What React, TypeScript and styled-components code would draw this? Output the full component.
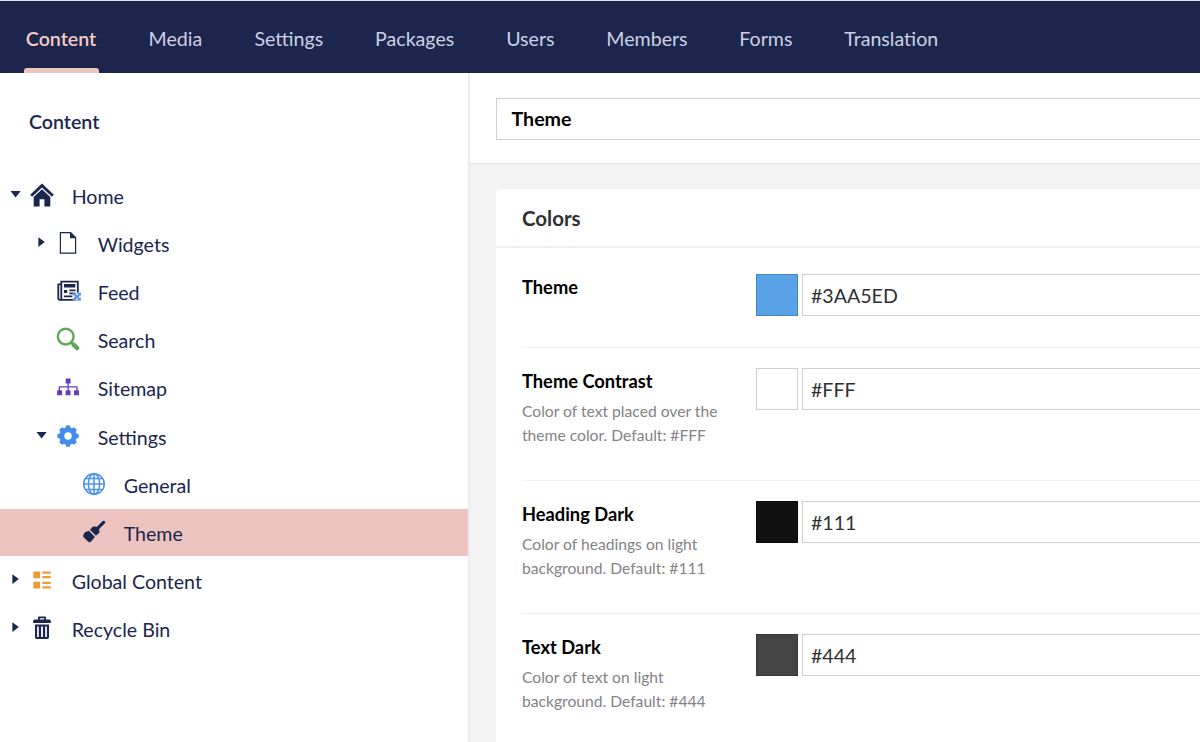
import React from 'react';
import styled, { createGlobalStyle } from 'styled-components';

const navy = '#1b264f';
const pink = '#edc5c0';

const GlobalStyle = createGlobalStyle`
  *, *::before, *::after { box-sizing: border-box; }
  body { margin: 0; background: #fff; overflow: hidden; }
`;

const Page = styled.div`
  display: flex;
  flex-direction: column;
  width: 100vw;
  height: 100vh;
  overflow: hidden;
  font-family: Lato, 'Liberation Sans', sans-serif;
  font-size: 19.6px;
  color: ${navy};
`;

const TopBar = styled.nav`
  display: flex;
  flex: none;
  gap: 47.9px;
  height: 73px;
  padding-left: 23.5px;
  background: #1c264d;
  border-top: 1px solid #dde3ee;
`;

const NavItem = styled.a<{ $active?: boolean; $width: number }>`
  display: flex;
  flex-direction: column;
  justify-content: space-between;
  align-items: center;
  flex: none;
  width: ${(p) => p.$width}px;
  line-height: 24px;
  padding-top: 26px;
  white-space: nowrap;
  color: ${(p) => (p.$active ? '#f5c9c4' : '#ccd0e4')};
  font-weight: ${(p) => (p.$active ? 600 : 400)};
  &::after {
    content: '';
    width: 100%;
    height: 5px;
    border-radius: 3px 3px 0 0;
    background: ${(p) => (p.$active ? pink : 'transparent')};
  }
`;

const Body = styled.div`
  display: flex;
  flex: 1;
  min-height: 0;
`;

const Sidebar = styled.aside`
  flex: none;
  width: 470px;
  border-right: 2px solid #edecee;
`;

const SidebarTitle = styled.h2`
  margin: 0;
  height: 98px;
  padding: 37px 0 0 29px;
  font-size: 19.6px;
  line-height: 24px;
  font-weight: 600;
`;

const TreeRow = styled.div<{ $depth: number; $selected?: boolean }>`
  display: flex;
  align-items: center;
  height: 47px;
  margin-bottom: 1.22px;
  padding-left: ${(p) => 8 + p.$depth * 26}px;
  background: ${(p) => (p.$selected ? '#ecc3be' : 'transparent')};
`;

const Caret = styled.svg`
  flex: none;
  width: 14px;
  height: 14px;
  margin: 0 7.5px 2px 0;
  fill: ${navy};
`;

const Icon = styled.svg`
  flex: none;
  width: 24px;
  height: 24px;
  overflow: visible;
`;

const TreeLabel = styled.span`
  margin-left: 18.2px;
  padding-top: 4px;
  line-height: 24px;
  white-space: nowrap;
`;

const Editor = styled.main`
  display: flex;
  flex-direction: column;
  flex: 1;
  min-width: 0;
  background: #f4f3f4;
`;

const EditorHeader = styled.header`
  flex: none;
  height: 91px;
  padding: 25px 0 0 26px;
  background: #fff;
  border-bottom: 1px solid #e6e4e6;
`;

const Field = styled.div<{ $name?: boolean }>`
  display: flex;
  align-items: center;
  flex: 1;
  height: ${(p) => (p.$name ? 41.5 : 42)}px;
  padding-left: ${(p) => (p.$name ? 14.5 : 8)}px;
  border: 1px solid #cfcdd0;
  border-right: 0;
  background: #fff;
  color: ${(p) => (p.$name ? '#000' : '#303033')};
  font-weight: ${(p) => (p.$name ? 700 : 400)};
`;

const Card = styled.section`
  flex: 1;
  margin: 25px 0 0 26px;
  background: #fff;
  border-radius: 4px 0 0 0;
`;

const CardTitle = styled.h3`
  display: flex;
  align-items: center;
  margin: 0;
  height: 59px;
  padding-left: 26px;
  border-bottom: 2px solid #efeeef;
  font-size: 20.5px;
  font-weight: 700;
  color: #303033;
`;

const Property = styled.div<{ $height: number }>`
  display: grid;
  grid-template-columns: 234px 1fr;
  height: ${(p) => p.$height}px;
  margin-left: 26px;
  padding-top: ${(p) => (p.$height === 100 ? 26 : 20)}px;
  border-bottom: 1px solid #f3f2f3;
`;

const Label = styled.div`
  padding-top: 1px;
  font-size: 18.3px;
  line-height: 24px;
  font-weight: 700;
  color: #000;
`;

const Description = styled.div`
  margin-top: 7px;
  font-size: 15.65px;
  line-height: 23.5px;
  white-space: pre-line;
  color: #838286;
`;

const ColorInput = styled.div`
  display: flex;
  gap: 4px;
`;

const Swatch = styled.span<{ $color: string; $edge: string }>`
  flex: none;
  width: 42px;
  height: 42px;
  background: ${(p) => p.$color};
  border: 1px solid ${(p) => p.$edge};
`;

const icons: Record<string, React.ReactNode> = {
  home: (
    <g fill={navy}>
      <path d="M12 .5 23.8 11.8 21.9 13.8 12 4.4 2.1 13.8.2 11.8Z" />
      <path d="M12 6.2 20.3 14V23.4H14.4V16.2H9.6V23.4H3.7V14Z" />
    </g>
  ),
  file: (
    <g>
      <path d="M4.400 1.600h10.200l5 5v15.600H4.400Z" fill="none" stroke={navy} strokeWidth="1.2" />
      <path d="M14 1.200v6h6Z" fill={navy} />
    </g>
  ),
  feed: (
    <g>
      <path d="M5.300 2.700H21.800V20.800H5.300ZM5.300 5.400H2.300V19.200Q2.300 20.800 4 20.800H6" fill="none" stroke={navy} strokeWidth="1.8" />
      <path d="M8 5h11.300v3.400H8ZM8 11h3.200v3H8ZM13.400 10.600h6.200v1.600h-6.200ZM13.400 13.600h5.200v1.600h-5.200ZM8 16.600h8.400v1.600H8Z" fill={navy} />
      <rect x="16.800" y="13.600" width="8.200" height="8" fill="#dfe9fb" />
      <path d="M17 13.800h3v2.600h-3ZM21.900 13.800h3v2.600h-3ZM17 19h3v2.600h-3ZM21.900 19h3v2.600h-3ZM18.900 16h4v3.400h-4Z" fill="#5b8fe8" />
    </g>
  ),
  search: (
    <g fill="none" stroke="#5fa655">
      <circle cx="9.700" cy="9.600" r="7.900" strokeWidth="2.4" />
      <path d="m15.400 15.700 1.800 1.700" strokeWidth="2.600" />
      <path d="m17.600 17.700 3.600 3.400" strokeWidth="4.400" strokeLinecap="round" />
    </g>
  ),
  sitemap: (
    <g fill="#663ebd">
      <rect x="9.700" y="3.600" width="4.900" height="4.900" rx=".6" />
      <path d="M11.500 8h1.300v3.200h8.800v5h-1.300v-3.700h-7.500v3.700h-1.300v-3.700H4v3.700H2.700v-5h8.800Z" />
      <rect x="1.100" y="15.300" width="5" height="5" rx=".6" />
      <rect x="9.600" y="15.300" width="5" height="5" rx=".6" />
      <rect x="18" y="15.300" width="5" height="5" rx=".6" />
    </g>
  ),
  gear: (
    <g>
      <circle cx="12" cy="12" r="6.200" fill="none" stroke="#438eea" strokeWidth="5" />
      {[0, 45, 90, 135, 180, 225, 270, 315].map((a) => (
        <path key={a} d="M9.200 5 10 1.500Q12 1 14 1.500L14.800 5Z" fill="#438eea" transform={`rotate(${a} 12 12)`} />
      ))}
    </g>
  ),
  globe: (
    <g fill="none" stroke="#4b93ec" strokeWidth="1.5">
      <circle cx="12" cy="12" r="10.300" />
      <ellipse cx="12" cy="12" rx="5.600" ry="10.300" />
      <path d="M12 1.700v20.600M1.700 12h20.600M3.300 6.600h17.400M3.300 17.400h17.400" />
    </g>
  ),
  brush: (
    <g fill={navy} transform="translate(0 -.4)">
      <path d="M20.400 1.700Q22 .6 23 1.800T22.400 4.200L17.200 9.300 17.400 13.200 13.900 16.200 8 10.200 11 6.900 15 7.100Z" />
      <path d="M6.900 11.200 12.900 17.300 8.600 22.300Q7.600 23.200 6.300 22.200L1.600 17.600Q.6 16.400 1.400 15.200L3 12.600Z" />
    </g>
  ),
  grid: (
    <path
      d="M3.300 3.500h6.700v6.700H3.300ZM12.400 3.500h8.300v2.200h-8.300ZM12.400 8h8.300v2.200h-8.300ZM3.300 13.700h6.700v6.700H3.300ZM12.400 13.700h8.300v2.200h-8.300ZM12.400 18.200h8.300v2.200h-8.300Z"
      fill="#f09a37"
    />
  ),
  trash: (
    <g fill={navy}>
      <path d="M8 3.500V1.600Q8 .6 9 .6h6q1 0 1 1v1.900h3.400q1.400 0 1.400 1.500v1.900H3.200V5q0-1.500 1.400-1.500ZM9.800 3.500h4.400V2.300H9.800Z" fillRule="evenodd" />
      <path d="M5 8.600h14v12.700q0 1.700-1.700 1.700H6.700Q5 23 5 21.300ZM7.100 10.600v10.300h1.700v-10.300ZM11.100 10.600v10.300h1.800v-10.300ZM15.200 10.600v10.300h1.700v-10.300Z" fillRule="evenodd" />
    </g>
  ),
};

type Node = { label: string; icon: string; depth: number; caret?: 'open' | 'closed'; selected?: boolean };

const tree: Node[] = [
  { label: 'Home', icon: 'home', depth: 0, caret: 'open' },
  { label: 'Widgets', icon: 'file', depth: 1, caret: 'closed' },
  { label: 'Feed', icon: 'feed', depth: 1 },
  { label: 'Search', icon: 'search', depth: 1 },
  { label: 'Sitemap', icon: 'sitemap', depth: 1 },
  { label: 'Settings', icon: 'gear', depth: 1, caret: 'open' },
  { label: 'General', icon: 'globe', depth: 2 },
  { label: 'Theme', icon: 'brush', depth: 2, selected: true },
  { label: 'Global Content', icon: 'grid', depth: 0, caret: 'closed' },
  { label: 'Recycle Bin', icon: 'trash', depth: 0, caret: 'closed' },
];

const sections = [
  { label: 'Content', width: 75 },
  { label: 'Media', width: 58 },
  { label: 'Settings', width: 73 },
  { label: 'Packages', width: 83 },
  { label: 'Users', width: 52.5 },
  { label: 'Members', width: 85 },
  { label: 'Forms', width: 57 },
  { label: 'Translation', width: 98 },
];

const properties = [
  { label: 'Theme', value: '#3AA5ED', color: '#5aa2e6', edge: '#4285c4', height: 100, text: '' },
  { label: 'Theme Contrast', value: '#FFF', color: '#fff', edge: '#cfcdd0', height: 133, text: 'Color of text placed over the\ntheme color. Default: #FFF' },
  { label: 'Heading Dark', value: '#111', color: '#111', edge: '#080808', height: 133, text: 'Color of headings on light\nbackground. Default: #111' },
  { label: 'Text Dark', value: '#444', color: '#444', edge: '#363636', height: 133, text: 'Color of text on light\nbackground. Default: #444' },
];

export default function App() {
  return (
    <Page>
      <GlobalStyle />
      <TopBar>
        {sections.map((s, i) => (
          <NavItem key={s.label} $active={i === 0} $width={s.width}>
            {s.label}
          </NavItem>
        ))}
      </TopBar>
      <Body>
        <Sidebar>
          <SidebarTitle>Content</SidebarTitle>
          {tree.map((n) => (
            <TreeRow key={n.label} $depth={n.depth} $selected={n.selected}>
              <Caret viewBox="0 0 14 14">
                {n.caret === 'open' && <path d="M2.500 4h10.200L7.600 10.500Z" />}
                {n.caret === 'closed' && <path d="M4.400 2.300v9.600L10.800 7.100Z" />}
              </Caret>
              <Icon viewBox="0 0 24 24">{icons[n.icon]}</Icon>
              <TreeLabel>{n.label}</TreeLabel>
            </TreeRow>
          ))}
        </Sidebar>
        <Editor>
          <EditorHeader>
            <Field $name>Theme</Field>
          </EditorHeader>
          <Card>
            <CardTitle>Colors</CardTitle>
            {properties.map((p) => (
              <Property key={p.label} $height={p.height}>
                <div>
                  <Label>{p.label}</Label>
                  {p.text && <Description>{p.text}</Description>}
                </div>
                <ColorInput>
                  <Swatch $color={p.color} $edge={p.edge} />
                  <Field>{p.value}</Field>
                </ColorInput>
              </Property>
            ))}
          </Card>
        </Editor>
      </Body>
    </Page>
  );
}
